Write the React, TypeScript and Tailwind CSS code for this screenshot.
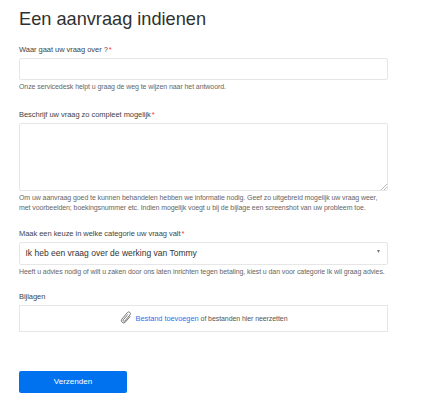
import React, { useState } from "react";

interface FieldProps {
  label: string;
  required?: boolean;
  hint?: string[];
  className?: string;
  children: React.ReactNode;
}

const Field: React.FC<FieldProps> = ({
  label,
  required,
  hint,
  className = "",
  children,
}) => (
  <div className={`flex flex-col ${className}`}>
    <label className="mb-[3px] h-[11px] text-[7.5px] leading-[11px] tracking-[-0.04px] whitespace-nowrap text-[#444]">
      {label}
      {required && <span className="ml-px text-[#f33]">*</span>}
    </label>
    {children}
    {hint && (
      <div className="mt-[2px] text-[7px] leading-[10.4px] tracking-[-0.085px] text-[#666]">
        {hint.map((line) => (
          <p key={line} className="w-fit whitespace-nowrap">
            {line}
          </p>
        ))}
      </div>
    )}
  </div>
);

const App: React.FC = () => {
  const [subject, setSubject] = useState("");
  const [description, setDescription] = useState("");

  return (
    <main className="min-h-[416px] bg-white pl-[19px] font-['Liberation_Sans',Arial,sans-serif]">
      <h1 className="h-[44px] pt-[8px] text-[18.2px] leading-[22px] whitespace-nowrap text-[#2f3130]">
        Een aanvraag indienen
      </h1>
      <form className="w-[369px]" onSubmit={(e) => e.preventDefault()}>
        <Field
          label="Waar gaat uw vraag over ?"
          required
          hint={["Onze servicedesk helpt u graag de weg te wijzen naar het antwoord."]}
          className="h-[65px]"
        >
          <input
            className="h-[22px] rounded-[2px] border border-[#e6e6e6] px-[6px] text-[8px] outline-none"
            value={subject}
            onChange={(e) => setSubject(e.target.value)}
          />
        </Field>

        <Field
          label="Beschrijf uw vraag zo compleet mogelijk"
          required
          hint={[
            "Om uw aanvraag goed te kunnen behandelen hebben we informatie nodig. Geef zo uitgebreid mogelijk uw vraag weer,",
            "met voorbeelden; boekingsnummer etc. Indien mogelijk voegt u bij de bijlage een screenshot van uw probleem toe.",
          ]}
          className="h-[119px]"
        >
          <div className="relative h-[68px]">
            <textarea
              className="block h-full w-full resize-none rounded-[2px] border border-[#e6e6e6] p-[6px] text-[8px] outline-none"
              value={description}
              onChange={(e) => setDescription(e.target.value)}
            />
            {/* Resize grip */}
            <svg
              className="pointer-events-none absolute right-[1px] bottom-[1px] h-[6px] w-[6px]"
              viewBox="0 0 6 6"
              stroke="#999"
              strokeWidth={0.7}
            >
              <path d="M0 6 6 0M3 6l3-3" />
            </svg>
          </div>
        </Field>

        <Field
          label="Maak een keuze in welke categorie uw vraag valt"
          required
          hint={[
            "Heeft u advies nodig of wilt u zaken door ons laten inrichten tegen betaling, kiest u dan voor categorie Ik wil graag advies.",
          ]}
          className="h-[63px]"
        >
          <button
            type="button"
            className="flex h-[23px] items-center justify-between rounded-[2px] border border-[#e6e6e6] pr-[7px] pl-[5.5px] text-[8.5px] text-[#333]"
          >
            <span className="whitespace-nowrap">Ik heb een vraag over de werking van Tommy</span>
            <svg className="mb-[4px] h-[3px] w-[3px]" viewBox="0 0 3 3" fill="#777">
              <path d="M0 0h3L1.5 3z" />
            </svg>
          </button>
        </Field>

        <Field label="Bijlagen" className="h-[80px]">
          <div className="flex h-[27px] items-center justify-center border border-[#e6e6e6] text-[7px] tracking-[-0.08px] text-[#555]">
            <svg
              className="mr-[4px] mb-[2px] h-[13px] w-[12px]"
              viewBox="0 0 12 13"
              fill="none"
              stroke="#666"
              strokeWidth={0.8}
              strokeLinecap="round"
            >
              <path
                transform="rotate(40 6 6.5)"
                d="M8.5 3.2v7.2a2.3 2.3 0 0 1-4.6 0V1.9a1.75 1.75 0 0 1 3.5 0v8a1 1 0 0 1-2 0V3.4"
              />
            </svg>
            <div className="flex items-baseline gap-[2px] leading-[10px] whitespace-nowrap">
              <a className="text-[7.4px] tracking-[-0.04px] text-[#1f73f1]">Bestand toevoegen</a>
              <span>of bestanden hier neerzetten</span>
            </div>
          </div>
        </Field>

        <button
          type="submit"
          className="block h-[22px] w-[108px] rounded-[2px] bg-[#0072ef] text-[8.1px] leading-[22px] tracking-[-0.04px] text-white"
        >
          Verzenden
        </button>
      </form>
    </main>
  );
};

export default App;
